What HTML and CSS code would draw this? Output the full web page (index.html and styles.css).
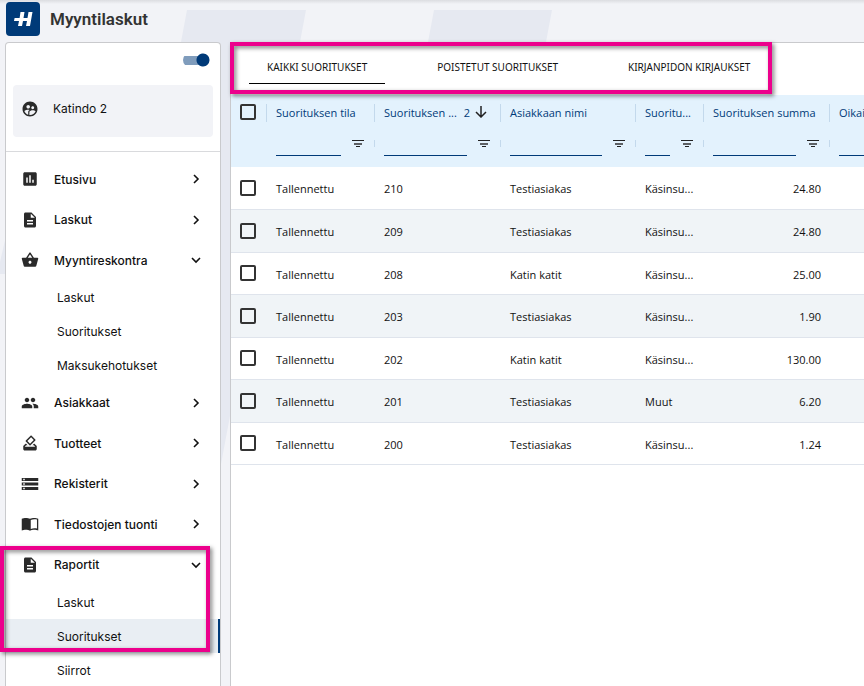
FILE: index.html
```
<!DOCTYPE html>
<html lang="fi">
<head>
    <meta charset="UTF-8">
    <meta name="viewport" content="width=device-width, initial-scale=1.0">
    <title>Myyntilaskut</title>
    <link rel="stylesheet" href="styles.css">
</head>
<body>
    <svg class="backdrop" width="864" height="686" viewBox="0 0 864 686" aria-hidden="true">
        <polygon points="187,10 306,10 221,464 102,464"/>
        <polygon points="434,10 552,10 467,464 349,464"/>
        <polygon points="6,236 6,274 0,274 0,262"/>
    </svg>

    <svg class="sprite" width="0" height="0" aria-hidden="true">
        <symbol id="icon-people-circle" viewBox="0 0 24 24">
            <path d="M12 2C6.480 2 2 6.480 2 12s4.480 10 10 10 10-4.480 10-10S17.520 2 12 2zm3.610 6.340c1.070 0 1.930.86 1.930 1.930s-.86 1.930-1.930 1.930-1.930-.86-1.930-1.930c-.01-1.070.86-1.930 1.930-1.930zm-6-1.580c1.300 0 2.360 1.060 2.360 2.360s-1.060 2.360-2.360 2.360-2.360-1.060-2.360-2.360c0-1.310 1.050-2.360 2.360-2.360zm0 9.130v3.750c-2.400-.75-4.300-2.600-5.140-4.960 1.050-1.120 3.670-1.690 5.140-1.690.53 0 1.200.08 1.900.22-1.640.87-1.900 2.020-1.900 2.680zM12 20c-.27 0-.53-.01-.79-.04v-4.070c0-1.420 2.940-2.130 4.400-2.130 1.070 0 2.920.39 3.840 1.150C18.280 17.880 15.390 20 12 20z"/>
        </symbol>
        <symbol id="icon-chart" viewBox="0 0 24 24">
            <path d="M19 3H5c-1.100 0-2 .9-2 2v14c0 1.100.9 2 2 2h14c1.100 0 2-.9 2-2V5c0-1.100-.9-2-2-2zM9 17H7v-7h2v7zm4 0h-2V7h2v10zm4 0h-2v-4h2v4z"/>
        </symbol>
        <symbol id="icon-document" viewBox="0 0 24 24">
            <path d="M14 2H6c-1.100 0-2 .9-2 2v16c0 1.100.9 2 2 2h12c1.100 0 2-.9 2-2V8l-6-6zm2 16H8v-2h8v2zm0-4H8v-2h8v2zm-3-5V3.500L18.500 9H13z"/>
        </symbol>
        <symbol id="icon-basket" viewBox="0 0 24 24">
            <path d="M17.210 9l-4.380-6.560a1 1 0 0 0-1.660.01L6.790 9H2c-.55 0-1 .45-1 1 0 .09.01.18.04.27l2.540 9.270C3.810 20.380 4.580 21 5.500 21h13c.92 0 1.690-.62 1.930-1.460l2.540-9.270L23 10c0-.55-.45-1-1-1h-4.790zM9 9l3-4.400L15 9H9zm3 8c-1.100 0-2-.9-2-2s.9-2 2-2 2 .9 2 2-.9 2-2 2z"/>
        </symbol>
        <symbol id="icon-people" viewBox="0 0 24 24">
            <path d="M16 11c1.660 0 2.990-1.340 2.990-3S17.660 5 16 5s-3 1.340-3 3 1.340 3 3 3zm-8 0c1.660 0 2.990-1.340 2.990-3S9.660 5 8 5 5 6.340 5 8s1.340 3 3 3zm0 2c-2.330 0-7 1.170-7 3.500V19h14v-2.500C15 14.170 10.330 13 8 13zm8 0c-.29 0-.62.02-.97.05 1.160.84 1.970 1.970 1.970 3.450V19h6v-2.500c0-2.330-4.670-3.500-7-3.500z"/>
        </symbol>
        <symbol id="icon-vote" viewBox="0 0 24 24">
            <path d="M18 13h-.68l-2 2h1.910L19 17H5l1.780-2h2.050l-2-2H6l-3 3v4c0 1.100.89 2 1.990 2H19c1.100 0 2-.89 2-2v-4l-3-3zm-1-5.050l-4.950 4.950-3.540-3.540 4.950-4.950L17 7.950zm-4.240-5.660L6.390 8.660c-.39.39-.39 1.020 0 1.410l4.950 4.950c.39.39 1.020.39 1.410 0l6.360-6.360c.39-.39.39-1.020 0-1.410l-4.950-4.950c-.38-.4-1.010-.4-1.400-.01z"/>
        </symbol>
        <symbol id="icon-storage" viewBox="0 0 24 24">
            <path d="M1 20h22v-4H1v4zm2-3h2v2H3v-2zM1 4v4h22V4H1zm4 3H3V5h2v2zM1 14h22v-4H1v4zm2-3h2v2H3v-2z"/>
        </symbol>
        <symbol id="icon-book" viewBox="0 0 24 24">
            <path d="M12 5C10.500 4.200 8.500 4 6.500 4S2.500 4.200 1 5v15.500c1.500-.8 3.500-1 5.500-1s4 .2 5.500 1.500c1.500-1.300 3.500-1.500 5.500-1.500s4 .2 5.500 1V5c-1.500-.8-3.500-1-5.500-1S13.500 4.200 12 5zm9.300 13c-2.600-.5-5.800-.5-8.300.8V6.500c2.500-1.200 5.700-1.200 8.300-.6V18z"/>
        </symbol>
        <symbol id="icon-chevron-right" viewBox="0 0 12 12">
            <path d="M4 2l4 4-4 4" fill="none" stroke="currentColor" stroke-width="1.600"/>
        </symbol>
        <symbol id="icon-chevron-down" viewBox="0 0 12 12">
            <path d="M2 4l4 4 4-4" fill="none" stroke="currentColor" stroke-width="1.600"/>
        </symbol>
        <symbol id="icon-filter" viewBox="0 0 12 10">
            <path d="M0 1h12v1H0zM4 7h4v1H4z"/>
            <path d="M2 4h8v2H2z" opacity="0.7"/>
        </symbol>
    </svg>

    <header class="topbar">
        <svg class="logo" viewBox="0 0 34 34" role="img" aria-label="Logo">
            <path d="M14.500 10h4l-1 6h4l1-6h4l-2.500 14h-4l1-5h-4l-1 5h-4l1-5H8l.6-3h5z"/>
        </svg>
        <h1>Myyntilaskut</h1>
    </header>

    <div class="layout">
        <aside class="sidebar">
            <div class="toggle-row">
                <input type="checkbox" class="switch" aria-label="Valikko" checked>
            </div>
            <button class="company"><svg><use href="#icon-people-circle"/></svg>Katindo 2</button>
            <nav>
                <ul class="menu">
                    <li><a href="#"><svg><use href="#icon-chart"/></svg><span>Etusivu</span><svg class="chevron"><use href="#icon-chevron-right"/></svg></a></li>
                    <li><a href="#"><svg><use href="#icon-document"/></svg><span>Laskut</span><svg class="chevron"><use href="#icon-chevron-right"/></svg></a></li>
                    <li>
                        <a href="#"><svg><use href="#icon-basket"/></svg><span>Myyntireskontra</span><svg class="chevron"><use href="#icon-chevron-down"/></svg></a>
                        <ul class="submenu">
                            <li><a href="#">Laskut</a></li>
                            <li><a href="#">Suoritukset</a></li>
                            <li><a href="#">Maksukehotukset</a></li>
                        </ul>
                    </li>
                    <li><a href="#"><svg><use href="#icon-people"/></svg><span>Asiakkaat</span><svg class="chevron"><use href="#icon-chevron-right"/></svg></a></li>
                    <li><a href="#"><svg><use href="#icon-vote"/></svg><span>Tuotteet</span><svg class="chevron"><use href="#icon-chevron-right"/></svg></a></li>
                    <li><a href="#"><svg><use href="#icon-storage"/></svg><span>Rekisterit</span><svg class="chevron"><use href="#icon-chevron-right"/></svg></a></li>
                    <li><a href="#"><svg><use href="#icon-book"/></svg><span>Tiedostojen tuonti</span><svg class="chevron"><use href="#icon-chevron-right"/></svg></a></li>
                    <li>
                        <a href="#"><svg><use href="#icon-document"/></svg><span>Raportit</span><svg class="chevron"><use href="#icon-chevron-down"/></svg></a>
                        <ul class="submenu">
                            <li><a href="#">Laskut</a></li>
                            <li><a href="#" class="active">Suoritukset</a></li>
                            <li><a href="#">Siirrot</a></li>
                        </ul>
                    </li>
                </ul>
            </nav>
        </aside>

        <main class="content">
            <div class="tabs">
                <button class="tab selected">KAIKKI SUORITUKSET</button>
                <button class="tab">POISTETUT SUORITUKSET</button>
                <button class="tab">KIRJANPIDON KIRJAUKSET</button>
            </div>
            <table class="grid">
                <colgroup>
                    <col class="col-check">
                    <col class="col-state">
                    <col class="col-number">
                    <col class="col-customer">
                    <col class="col-type">
                    <col class="col-sum">
                    <col class="col-adjust">
                </colgroup>
                <thead>
                    <tr class="titles">
                        <th><input type="checkbox" aria-label="Valitse kaikki"></th>
                        <th>Suorituksen tila</th>
                        <th><div class="sorted"><span>Suorituksen ...</span><b>2</b><svg viewBox="0 0 12 12"><path d="M6 0v11M1 6l5 5 5-5"/></svg></div></th>
                        <th>Asiakkaan nimi</th>
                        <th>Suoritu...</th>
                        <th>Suorituksen summa</th>
                        <th>Oikaisu</th>
                    </tr>
                    <tr class="filters">
                        <td></td>
                        <td><div><input type="text" aria-label="Suorituksen tila"><button aria-label="Suodata"><svg><use href="#icon-filter"/></svg></button></div></td>
                        <td><div><input type="text" aria-label="Suorituksen numero"><button aria-label="Suodata"><svg><use href="#icon-filter"/></svg></button></div></td>
                        <td><div><input type="text" aria-label="Asiakkaan nimi"><button aria-label="Suodata"><svg><use href="#icon-filter"/></svg></button></div></td>
                        <td><div><input type="text" aria-label="Suoritustapa"><button aria-label="Suodata"><svg><use href="#icon-filter"/></svg></button></div></td>
                        <td><div><input type="text" aria-label="Suorituksen summa"><button aria-label="Suodata"><svg><use href="#icon-filter"/></svg></button></div></td>
                        <td><div><input type="text" aria-label="Oikaisu"><button aria-label="Suodata"><svg><use href="#icon-filter"/></svg></button></div></td>
                    </tr>
                </thead>
                <tbody>
                    <tr><td><input type="checkbox" aria-label="Valitse 210"></td><td>Tallennettu</td><td>210</td><td>Testiasiakas</td><td>Käsinsu...</td><td class="amount">24.80</td><td></td></tr>
                    <tr><td><input type="checkbox" aria-label="Valitse 209"></td><td>Tallennettu</td><td>209</td><td>Testiasiakas</td><td>Käsinsu...</td><td class="amount">24.80</td><td></td></tr>
                    <tr><td><input type="checkbox" aria-label="Valitse 208"></td><td>Tallennettu</td><td>208</td><td>Katin katit</td><td>Käsinsu...</td><td class="amount">25.00</td><td></td></tr>
                    <tr><td><input type="checkbox" aria-label="Valitse 203"></td><td>Tallennettu</td><td>203</td><td>Testiasiakas</td><td>Käsinsu...</td><td class="amount">1.90</td><td></td></tr>
                    <tr><td><input type="checkbox" aria-label="Valitse 202"></td><td>Tallennettu</td><td>202</td><td>Katin katit</td><td>Käsinsu...</td><td class="amount">130.00</td><td></td></tr>
                    <tr><td><input type="checkbox" aria-label="Valitse 201"></td><td>Tallennettu</td><td>201</td><td>Testiasiakas</td><td>Muut</td><td class="amount">6.20</td><td></td></tr>
                    <tr><td><input type="checkbox" aria-label="Valitse 200"></td><td>Tallennettu</td><td>200</td><td>Testiasiakas</td><td>Käsinsu...</td><td class="amount">1.24</td><td></td></tr>
                </tbody>
            </table>
        </main>
    </div>

    <div class="marker marker-tabs"></div>
    <div class="marker marker-reports"></div>
</body>
</html>
```

FILE: styles.css
```
* {
    box-sizing: border-box;
}

body {
    margin: 0;
    height: 100vh;
    overflow: hidden;
    display: flex;
    flex-direction: column;
    position: relative;
    font-family: "Open Sans", "Noto Sans", sans-serif;
    font-size: 11px;
    color: #111;
    background-color: #f2f3f7;
}

button {
    border: 0;
    padding: 0;
    background: none;
    font: inherit;
    color: inherit;
    cursor: pointer;
}

ul {
    list-style: none;
    margin: 0;
    padding: 0;
}

a {
    color: inherit;
    text-decoration: none;
}

.backdrop {
    position: absolute;
    top: 0;
    left: 0;
    z-index: -1;
    fill: #e6e9f1;
}

.sprite {
    position: absolute;
}

/* top bar */
.topbar {
    display: flex;
    align-items: center;
    gap: 10px;
    height: 42px;
    padding: 0 6px 4px;
    flex-shrink: 0;
    background: linear-gradient(#dcdde1, rgba(242, 243, 247, 0) 4px);
}

.logo {
    width: 34px;
    height: 34px;
    border-radius: 4px;
    background-color: #003a78;
    fill: #fff;
}

h1 {
    margin: 0;
    font-family: Roboto, sans-serif;
    font-size: 17px;
    font-weight: 600;
    color: #333;
}

.layout {
    display: flex;
    flex: 1;
    min-height: 0;
    gap: 9px;
    padding-left: 5px;
}

/* sidebar */
.sidebar {
    width: 216px;
    flex-shrink: 0;
    overflow: hidden;
    font-family: Inter, sans-serif;
    font-size: 12px;
    background-color: #fff;
    border: 1px solid #c9cacd;
    border-bottom: 0;
    border-radius: 4px 4px 0 0;
}

.toggle-row {
    display: flex;
    justify-content: flex-end;
    height: 42px;
    padding: 10px 10px 0;
}

.switch {
    appearance: none;
    width: 27px;
    height: 14px;
    margin: 0;
    border-radius: 7px;
    background: radial-gradient(circle at 20px 7px, #003a78 6px, transparent 7px),
        linear-gradient(#7f9cbc, #7f9cbc) 0 3px / 24px 9px no-repeat;
}

.company {
    display: flex;
    align-items: center;
    gap: 14px;
    width: 200px;
    height: 52px;
    margin: 0 7px 14px;
    padding: 0 8px 5px;
    border-radius: 4px;
    background-color: #f2f3f7;
}

.company svg,
.menu svg {
    width: 18px;
    height: 18px;
    fill: #2a2a2a;
}

nav {
    border-top: 1px solid #d9dadd;
    padding-top: 7px;
}

.menu > li > a {
    display: flex;
    align-items: center;
    gap: 15px;
    height: 40px;
    padding: 0 18px 0 15px;
    font-weight: 500;
}

.menu > li:nth-child(even) > a {
    height: 41px;
}

.menu span {
    flex: 1;
}

.menu .chevron {
    width: 12px;
    height: 12px;
}

.submenu a {
    display: flex;
    align-items: center;
    height: 34px;
    padding-left: 51px;
    border-right: 2px solid transparent;
}

.submenu .active {
    background-color: #e9eef3;
    border-right-color: #003a78;
}

/* main panel */
.content {
    flex: 1;
    min-width: 0;
    overflow: hidden;
    background-color: #fff;
    border: 1px solid #c9cacd;
    border-right: 0;
    border-bottom: 0;
    border-radius: 4px 0 0 0;
}

.tabs {
    display: flex;
    gap: 34px;
    height: 52px;
    padding: 8px 18px 11px;
}

.tab {
    padding: 0 18px;
    border-bottom: 1px solid transparent;
    font-family: "Noto Sans", sans-serif;
    font-size: 10px;
}

.selected {
    border-bottom-color: #000;
}

.grid {
    width: 725px;
    table-layout: fixed;
    border-collapse: collapse;
}

.col-check {
    width: 36px;
}

.col-state {
    width: 108px;
}

.col-number,
.col-sum,
.col-adjust {
    width: 126px;
}

.col-customer {
    width: 135px;
}

.col-type {
    width: 68px;
}

.grid th,
.grid td {
    padding: 0 9px;
    text-align: left;
    font-weight: 400;
    white-space: nowrap;
}

.grid thead {
    background-color: #e3f2fd;
    color: #003a78;
}

.grid .titles th {
    height: 36px;
    padding-bottom: 2px;
    background: linear-gradient(#c3d9ec, #c3d9ec) right center / 1px 18px no-repeat;
}

.sorted {
    display: flex;
    align-items: center;
    gap: 5px;
}

.sorted span {
    flex: 1;
}

.sorted b {
    font-weight: 400;
}

.sorted svg {
    width: 12px;
    height: 12px;
    margin-right: 5px;
    flex-shrink: 0;
    fill: none;
    stroke: #222;
    stroke-width: 1.5;
}

.grid .filters td {
    height: 36px;
    padding-right: 0;
    vertical-align: top;
    background: linear-gradient(#c3d9ec, #c3d9ec) right 9px / 1px 7px no-repeat;
}

.grid .filters td:first-child {
    background: none;
}

.filters div {
    display: flex;
}

.filters input {
    flex: 1;
    min-width: 0;
    height: 25px;
    padding: 0;
    border: 0;
    border-bottom: 1px solid #003a78;
    border-radius: 0;
    background: none;
    font: inherit;
}

.filters button {
    display: flex;
    align-items: center;
    justify-content: center;
    width: 34px;
    height: 25px;
}

.filters svg {
    width: 12px;
    height: 10px;
    fill: #222;
}

.grid input[type="checkbox"] {
    appearance: none;
    display: block;
    width: 16px;
    height: 16px;
    margin: 0;
    border: 2px solid #333;
    border-radius: 2px;
}

.grid tbody td {
    height: 42px;
    padding-top: 2px;
    border-bottom: 1px solid #dfe4ec;
}

.grid tbody td:first-child {
    padding-top: 0;
}

.grid tbody tr:nth-child(even) td {
    height: 43px;
    background-color: #f0f4f7;
}

.grid .amount {
    text-align: right;
}

/* highlight frames drawn over the page */
.marker {
    position: absolute;
    border: 4px solid #ec008c;
    filter: drop-shadow(2px 2px 2px rgba(0, 0, 0, 0.5));
    pointer-events: none;
}

.marker-tabs {
    top: 42px;
    left: 230px;
    width: 542px;
    height: 52px;
}

.marker-reports {
    top: 546px;
    left: 0;
    width: 210px;
    height: 106px;
}
```
